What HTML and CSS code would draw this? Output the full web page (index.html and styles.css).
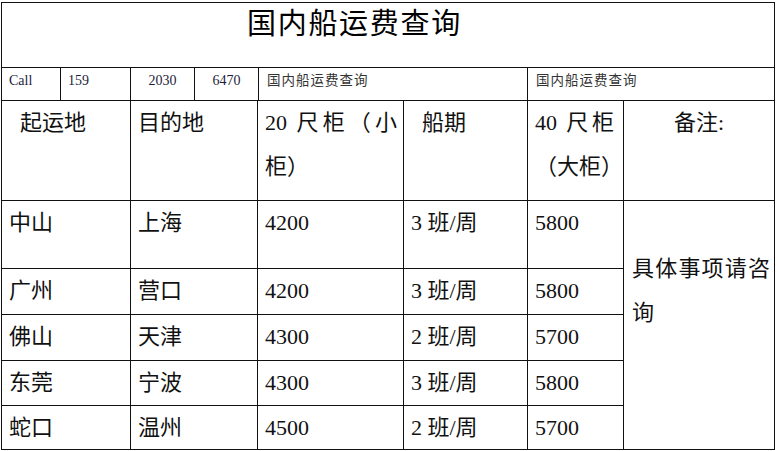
FILE: index.html
```html
<!DOCTYPE html>
<html lang="zh-CN">
<head>
<meta charset="utf-8">
<title>国内船运费查询</title>
<link rel="stylesheet" href="styles.css">
</head>
<body>
<div class="sheet">
  <div class="title">国内船运费查询</div>
  <div class="callrow">
    <div class="c">Call</div>
    <div class="c">159</div>
    <div class="c mid">2030</div>
    <div class="c mid">6470</div>
    <div class="c cn">国内船运费查询</div>
    <div class="c cn">国内船运费查询</div>
  </div>
  <div class="grid">
    <div class="cell indent">起运地</div>
    <div class="cell">目的地</div>
    <div class="cell just">20 尺柜（小柜）</div>
    <div class="cell indent">船期</div>
    <div class="cell"><span class="line spread">40 尺柜</span><span class="line">（大柜）</span></div>
    <div class="cell mid">备注:</div>

    <div class="cell">中山</div>
    <div class="cell">上海</div>
    <div class="cell">4200</div>
    <div class="cell">3 班/周</div>
    <div class="cell">5800</div>
    <div class="cell note just">具体事项请咨询</div>

    <div class="cell">广州</div>
    <div class="cell">营口</div>
    <div class="cell">4200</div>
    <div class="cell">3 班/周</div>
    <div class="cell">5800</div>

    <div class="cell">佛山</div>
    <div class="cell">天津</div>
    <div class="cell">4300</div>
    <div class="cell">2 班/周</div>
    <div class="cell">5700</div>

    <div class="cell">东莞</div>
    <div class="cell">宁波</div>
    <div class="cell">4300</div>
    <div class="cell">3 班/周</div>
    <div class="cell">5800</div>

    <div class="cell">蛇口</div>
    <div class="cell">温州</div>
    <div class="cell">4500</div>
    <div class="cell">2 班/周</div>
    <div class="cell">5700</div>
  </div>
</div>
</body>
</html>
```

FILE: styles.css
```css
body {
  margin: 0;
  background: #fff;
  font-family: "Liberation Serif", "Noto Sans CJK SC", serif;
  color: #111;
}

.sheet {
  margin: 2px 0 0 1px;
  width: 774px;
  box-sizing: border-box;
  padding: 1px;
  background: #111;
  display: flex;
  flex-direction: column;
  gap: 1px;
}

.title {
  background: #fff;
  height: 64px;
  box-sizing: border-box;
  padding-left: 245px;
  font-size: 29px;
  letter-spacing: 1.7px;
  line-height: 42px;
  color: #000;
}

.callrow {
  display: grid;
  grid-template-columns: 58px 69px 63px 63px 268px 246px;
  gap: 1px;
  height: 32px;
}

.c {
  background: #fff;
  font-size: 14px;
  line-height: 26px;
  padding-left: 7px;
  color: #1c1c3a;
  white-space: nowrap;
}

.c.mid {
  padding-left: 0;
  text-align: center;
}

.c.cn {
  padding-left: 8px;
  font-size: 13.5px;
  letter-spacing: 1px;
  color: #333;
}

.grid {
  display: grid;
  grid-template-columns: 128px 126px 145px 123px 95px 150px;
  grid-template-rows: 99px 67px 45px 45px 44px 43px;
  gap: 1px;
}

.cell {
  background: #fff;
  font-size: 22px;
  line-height: 44px;
  padding: 0 6px 0 7px;
  color: #111;
}

.cell.indent {
  padding-left: 18px;
}

.cell.mid {
  text-align: center;
  padding: 0;
}

.cell.just {
  text-align: justify;
}

.line {
  display: block;
  white-space: nowrap;
}

.line.spread {
  text-align: justify;
  text-align-last: justify;
  margin-right: 3px;
}

.cell.note {
  grid-column: 6;
  grid-row: 2 / span 5;
  padding: 46px 4px 0 8px;
}
```
